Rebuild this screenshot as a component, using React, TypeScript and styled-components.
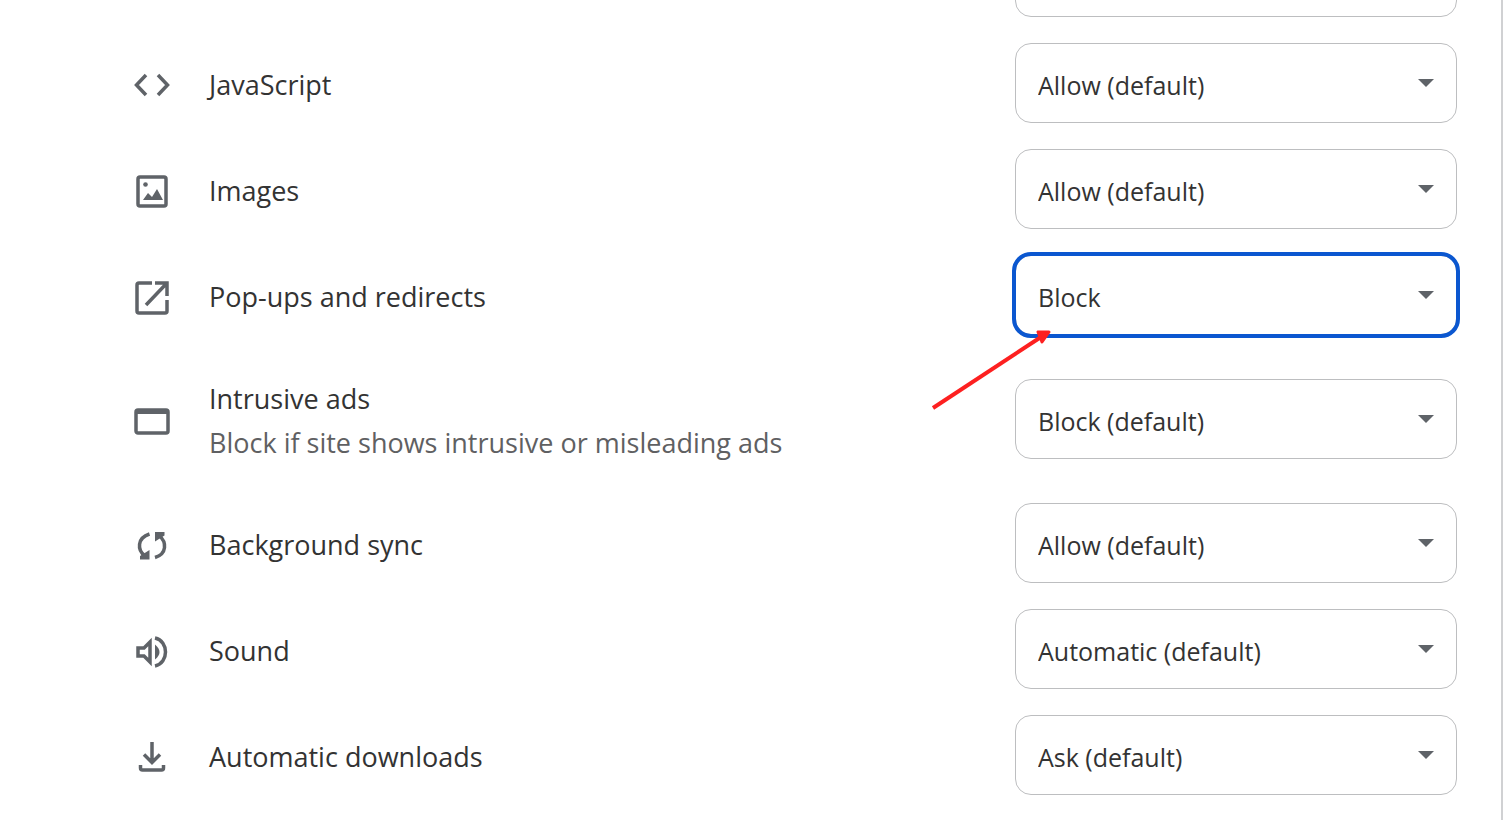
import React from "react";
import styled, { createGlobalStyle } from "styled-components";

const GlobalStyle = createGlobalStyle`
  *, *::before, *::after { box-sizing: border-box; }
  html, body { margin: 0; background: #fff; }
  body { font-family: "Open Sans", "Noto Sans", sans-serif; color: #333; }
`;

const Viewport = styled.div`
  display: flex;
  flex-direction: column;
  height: 100vh;
  overflow: hidden;
`;

const Panel = styled.main`
  display: flow-root;
  flex: 1;
  border-right: 2px solid #d0d1d3;
`;

const PermissionList = styled.ul`
  list-style: none;
  margin: -73px 0 0;
  padding: 0 44px 0 134px;
`;

const Row = styled.li<{ $tall?: boolean }>`
  display: flex;
  align-items: center;
  height: ${(p) => (p.$tall ? 142 : 106)}px;
`;

const Icon = styled.svg`
  flex: none;
  width: 36px;
  height: 36px;
  margin-right: 39px;
  fill: none;
  stroke: #5f6368;
`;

const Label = styled.label`
  flex: 1;
  padding-bottom: 2px;
  font-size: 27px;
  line-height: 44px;
`;

const Hint = styled.span`
  display: block;
  color: #5f6062;
`;

const Picker = styled.div`
  position: relative;
  display: grid;
  align-items: center;
  width: 442px;
  margin: 0 0 6px auto;
  & > * { grid-area: 1 / 1; }
`;

const Select = styled.select<{ $active?: boolean }>`
  appearance: none;
  width: 100%;
  height: 80px;
  padding: 4px 60px 0 22px;
  border: 1px solid #bdbec0;
  border-radius: 16px;
  outline: ${(p) => (p.$active ? "4px solid #0b57d0" : "none")};
  outline-offset: -1px;
  background: #fff;
  color: #333;
  font-family: inherit;
  font-size: 25px;
`;

const Caret = styled.svg`
  justify-self: end;
  width: 16px;
  height: 8px;
  margin-right: 23px;
  fill: #5f6368;
  pointer-events: none;
`;

const Pointer = styled.svg`
  position: absolute;
  left: -84px;
  top: 72px;
  width: 124px;
  height: 84px;
  fill: #fd2020;
  stroke: #fd2020;
  stroke-width: 4;
  pointer-events: none;
`;

type Permission = {
  id: string;
  name: string;
  hint?: string;
  value: string;
  active?: boolean;
  icon: React.ReactNode;
};

const permissions: Permission[] = [
  {
    id: "javascript",
    name: "JavaScript",
    value: "Allow (default)",
    icon: <path d="M12 7 2.500 17l9.500 10M24 7l9.500 10-9.500 10" />,
  },
  {
    id: "images",
    name: "Images",
    value: "Allow (default)",
    icon: (
      <>
        <rect x="4" y="3" width="28" height="29" rx="2" />
        <circle cx="11.500" cy="10.500" r="2.300" fill="#5f6368" stroke="none" />
        <path d="M9 26l5-7 4 4 5-8 6 11z" fill="#5f6368" stroke="none" />
      </>
    ),
  },
  {
    id: "popups",
    name: "Pop-ups and redirects",
    value: "Block",
    active: true,
    icon: <path d="M18 3H5q-2 0-2 2v26q0 2 2 2h26q2 0 2-2V20M21 3h12v13M33 3 12 25" />,
  },
  {
    id: "ads",
    name: "Intrusive ads",
    hint: "Block if site shows intrusive or misleading ads",
    value: "Block (default)",
    icon: (
      <>
        <rect x="2" y="6" width="32" height="23" rx="2" />
        <path d="M2 7.500h32" strokeWidth={5} />
      </>
    ),
  },
  {
    id: "sync",
    name: "Background sync",
    value: "Allow (default)",
    icon: (
      <>
        <path d="M15.500 6C3 10 3 22 11 28M21 29.500C33 26 33 14 25 7.500" />
        <path d="M6 31.500h9.500v-9.500l-9.500 6zM30.500 4H21v9.500l9.500-6z" fill="#5f6368" stroke="none" />
      </>
    ),
  },
  {
    id: "sound",
    name: "Sound",
    value: "Automatic (default)",
    icon: (
      <>
        <path d="M4 14h6l6-6v20l-6-6H4zM21 4c14 3 14 25 0 28" />
        <path d="M21 10.500q9 7.500 0 15z" fill="#5f6368" stroke="none" />
      </>
    ),
  },
  {
    id: "downloads",
    name: "Automatic downloads",
    value: "Ask (default)",
    icon: <path d="M18 2v20M10 14.500l8 8 8-8M6.500 25v3q0 2 2 2h19q2 0 2-2v-3" />,
  },
];

function DropDown({ id, value, active }: { id: string; value?: string; active?: boolean }) {
  return (
    <Picker>
      <Select id={id} $active={active} aria-label={value ? undefined : "Permission"}>
        {value && <option>{value}</option>}
      </Select>
      <Caret viewBox="0 0 16 8" aria-hidden="true">
        <path d="M0 0h16L8 8z" />
      </Caret>
      {active && (
        <Pointer viewBox="0 0 124 84" aria-hidden="true">
          <path d="M2 81 110 10" />
          <path d="M107 5l11 0-7 10z" strokeLinejoin="round" strokeWidth={3} />
        </Pointer>
      )}
    </Picker>
  );
}

export default function App() {
  return (
    <Viewport>
      <GlobalStyle />
      <Panel>
        <PermissionList>
          <Row>
            <DropDown id="previous" />
          </Row>
          {permissions.map((p) => (
            <Row key={p.id} $tall={!!p.hint}>
              <Icon viewBox="0 0 36 36" strokeWidth={3.5} aria-hidden="true">{p.icon}</Icon>
              <Label htmlFor={p.id}>
                {p.name}
                {p.hint && <Hint>{p.hint}</Hint>}
              </Label>
              <DropDown id={p.id} value={p.value} active={p.active} />
            </Row>
          ))}
        </PermissionList>
      </Panel>
    </Viewport>
  );
}
